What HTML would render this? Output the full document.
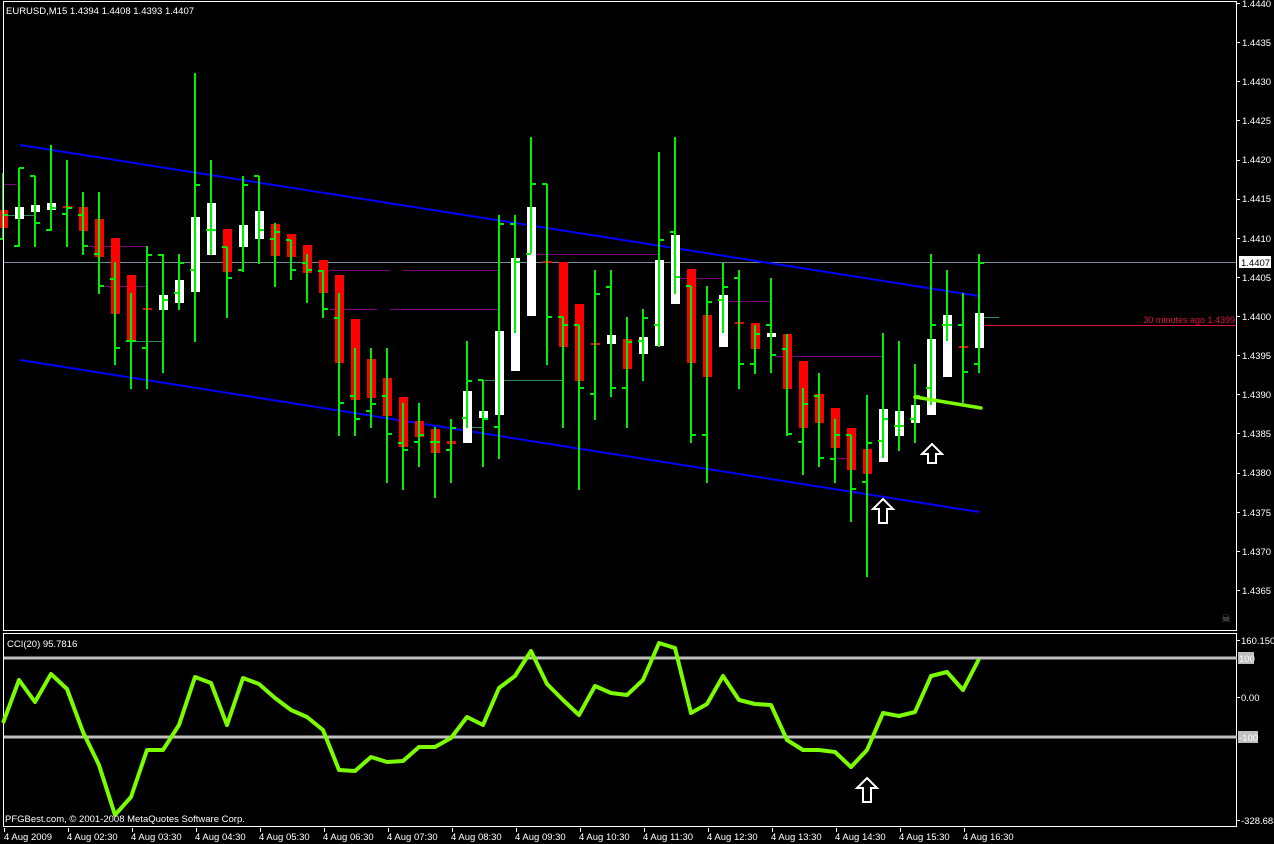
<!DOCTYPE html>
<html><head><meta charset="utf-8">
<style>
html,body{margin:0;padding:0;background:#000;width:1274px;height:844px;overflow:hidden}
svg{display:block}
text{font-family:"Liberation Sans",sans-serif;font-size:9.5px;fill:#fff}
</style></head><body>
<svg id="s" width="1274" height="844" xmlns="http://www.w3.org/2000/svg" shape-rendering="crispEdges">
<rect width="1274" height="844" fill="#000"/>
<!-- misc horizontal lines -->
<g stroke="#800080" stroke-width="1">
<line x1="3" y1="184.5" x2="17" y2="184.5"/>
<line x1="87" y1="246.5" x2="147" y2="246.5"/>
<line x1="103" y1="286.5" x2="147" y2="286.5"/>
<line x1="330" y1="270.5" x2="390" y2="270.5"/>
<line x1="403" y1="270.5" x2="498" y2="270.5"/>
<line x1="330" y1="309.5" x2="377" y2="309.5"/>
<line x1="390" y1="309.5" x2="498" y2="309.5"/>
<line x1="535" y1="254.5" x2="659" y2="254.5"/>
<line x1="675" y1="278.5" x2="723" y2="278.5"/>
<line x1="727" y1="301.5" x2="771" y2="301.5"/>
<line x1="775" y1="356.5" x2="883" y2="356.5"/>
<line x1="835" y1="458.5" x2="851" y2="458.5"/>
</g>
<g stroke="#2e8b57" stroke-width="1">
<line x1="3" y1="215.5" x2="35" y2="215.5"/>
<line x1="127" y1="341.5" x2="163" y2="341.5"/>
<line x1="480" y1="380.5" x2="563" y2="380.5"/>
<line x1="462" y1="427.5" x2="483" y2="427.5"/>
<line x1="975" y1="317.5" x2="999" y2="317.5"/>
</g>
<line x1="3" y1="262.5" x2="1237" y2="262.5" stroke="#778899"/>
<line x1="979" y1="325.5" x2="1237" y2="325.5" stroke="#dc143c"/>
<text x="1235" y="323" text-anchor="end" style="fill:#dc143c;font-size:9px">30 minutes ago 1.4399</text>
<!-- channels -->
<g stroke="#0000ff" stroke-width="2" shape-rendering="auto">
<line x1="20" y1="145" x2="979" y2="296"/>
<line x1="20" y1="360" x2="979" y2="512"/>
</g>
<g id="bars"></g>
<line x1="915" y1="397" x2="981" y2="408" stroke="#7cfc00" stroke-width="3.5" shape-rendering="auto" stroke-linecap="round"/>
<!-- arrows -->
<g fill="none" stroke="#fff" stroke-width="2" shape-rendering="auto">
<path d="M932 444 L942 454 L936 454 L936 463 L928 463 L928 454 L922 454 Z"/>
<path d="M883 499 L893 509 L887 509 L887 523 L879 523 L879 509 L873 509 Z"/>
<path d="M867 778 L877 788 L871 788 L871 802 L863 802 L863 788 L857 788 Z"/>
</g>
<!-- frames -->
<g fill="none" stroke="#fff" stroke-width="1">
<rect x="3.5" y="1.5" width="1233" height="629"/>
<rect x="3.5" y="633.5" width="1233" height="193"/>
</g>
<text x="6" y="14">EURUSD,M15  1.4394 1.4408 1.4393 1.4407</text>
<!-- price axis -->
<g id="pax"></g>
<g>
<text x="1242" y="7">1.4440</text><text x="1242" y="46">1.4435</text><text x="1242" y="85">1.4430</text>
<text x="1242" y="124">1.4425</text><text x="1242" y="163">1.4420</text><text x="1242" y="202">1.4415</text>
<text x="1242" y="242">1.4410</text><text x="1242" y="281">1.4405</text><text x="1242" y="320">1.4400</text>
<text x="1242" y="359">1.4395</text><text x="1242" y="398">1.4390</text><text x="1242" y="437">1.4385</text>
<text x="1242" y="476">1.4380</text><text x="1242" y="516">1.4375</text><text x="1242" y="555">1.4370</text>
<text x="1242" y="594">1.4365</text>
</g>
<rect x="1239" y="256" width="32" height="12" fill="#fff"/>
<text x="1241" y="266" style="fill:#000">1.4407</text>
<text x="1221" y="622" style="fill:#808080;font-size:11px">☠</text>
<!-- CCI -->
<text x="7" y="647">CCI(20) 95.7816</text>
<g stroke="#c0c0c0" stroke-width="3">
<line x1="4" y1="658" x2="1237" y2="658"/>
<line x1="4" y1="737" x2="1237" y2="737"/>
</g>
<polyline id="cci" fill="none" stroke="#7cfc00" stroke-width="4" stroke-linejoin="round" shape-rendering="auto" points="3,723 19,680 35,702 51,674 67,689 83,732 99,765 115,815 131,797 147,750 163,750 179,725 195,677 211,683 227,725 243,678 259,684 275,698 291,710 307,717 323,730 339,770 355,771 371,757 387,762 403,761 419,747 435,747 451,738 467,717 483,725 499,688 515,676 531,651 547,684 563,700 579,715 595,686 611,693 627,695 643,680 659,643 675,648 691,713 707,704 723,676 739,700 755,704 771,705 787,740 803,750 819,750 835,752 851,767 867,750 883,713 899,716 915,712 931,676 947,672 963,690 979,659"/>
<text x="5" y="822">PFGBest.com, © 2001-2008 MetaQuotes Software Corp.</text>
<text x="1241" y="644">160.150</text>
<rect x="1238" y="652" width="16" height="12" fill="#c0c0c0"/><text x="1239" y="662">100</text>
<text x="1241" y="701">0.00</text>
<rect x="1238" y="731" width="20" height="12" fill="#c0c0c0"/><text x="1239" y="741">-100</text>
<text x="1241" y="824">-328.683</text>
<g stroke="#fff"><line x1="1237" y1="640.5" x2="1240" y2="640.5"/><line x1="1237" y1="697.5" x2="1240" y2="697.5"/><line x1="1237" y1="820.5" x2="1240" y2="820.5"/></g>
<!-- time axis -->
<g id="tax" stroke="#fff"></g>
<g>
<text x="4" y="840">4 Aug 2009</text><text x="67" y="840">4 Aug 02:30</text><text x="131" y="840">4 Aug 03:30</text>
<text x="195" y="840">4 Aug 04:30</text><text x="259" y="840">4 Aug 05:30</text><text x="323" y="840">4 Aug 06:30</text>
<text x="387" y="840">4 Aug 07:30</text><text x="451" y="840">4 Aug 08:30</text><text x="515" y="840">4 Aug 09:30</text>
<text x="579" y="840">4 Aug 10:30</text><text x="643" y="840">4 Aug 11:30</text><text x="707" y="840">4 Aug 12:30</text>
<text x="771" y="840">4 Aug 13:30</text><text x="835" y="840">4 Aug 14:30</text><text x="899" y="840">4 Aug 15:30</text>
<text x="963" y="840">4 Aug 16:30</text>
</g>
</svg>
<script>
var NS="http://www.w3.org/2000/svg";
function el(p,n,a){var e=document.createElementNS(NS,n);for(var k in a)e.setAttribute(k,a[k]);p.appendChild(e);return e;}
// k: [bodyTop,bodyBot,color(w/r),high,low,openTick,closeTick]
var D=[
[210,228,'r',173,239,239,215],
[207,219,'w',168,247,246,168],
[205,212,'w',176,247,176,223],
[203,210,'w',145,231,230,208],
[206,208,'r',160,247,214,208],
[207,231,'r',192,255,215,246],
[219,257,'r',192,294,254,286],
[238,314,'r',262,365,279,348],
[275,342,'r',293,389,341,341],
[308,310,'r',246,389,348,255],
[295,310,'w',254,373,255,300],
[280,303,'w',254,310,293,263],
[217,292,'w',73,342,270,185],
[203,255,'w',160,255,230,230],
[229,272,'r',247,318,247,278],
[225,247,'w',176,272,270,185],
[211,239,'w',176,264,176,230],
[224,256,'r',223,287,239,232],
[234,257,'r',240,280,240,270],
[245,273,'r',254,303,263,270],
[260,293,'r',270,318,271,309],
[275,363,'r',293,436,318,403],
[319,400,'r',348,436,396,419],
[359,398,'r',348,428,411,404],
[378,416,'r',348,483,396,434],
[397,447,'r',403,490,443,450],
[421,437,'r',403,467,442,435],
[429,453,'r',427,498,442,442],
[441,444,'r',419,483,450,428],
[391,443,'w',341,428,418,381],
[411,418,'w',380,467,380,419],
[331,415,'w',215,459,427,224],
[258,371,'w',215,333,224,262],
[207,316,'w',137,253,254,184],
[261,263,'r',184,365,184,317],
[262,347,'r',317,428,317,325],
[304,381,'r',325,490,325,388],
[343,345,'r',270,420,394,294],
[335,344,'w',270,397,287,388],
[339,369,'r',317,428,388,342],
[337,354,'w',309,381,341,318],
[260,346,'w',152,347,325,240],
[235,304,'w',137,294,232,277],
[269,363,'r',286,443,286,435],
[315,377,'r',286,483,435,302],
[295,347,'w',263,333,300,287],
[322,324,'r',270,389,278,364],
[323,349,'r',325,374,364,334],
[333,337,'w',278,373,325,355],
[334,389,'r',334,436,349,434],
[361,428,'r',388,475,442,404],
[394,423,'r',373,467,396,458],
[408,448,'r',419,483,459,435],
[428,470,'r',435,522,435,489],
[449,474,'r',395,577,482,443],
[409,462,'w',333,458,441,419],
[411,436,'w',341,451,426,426],
[405,423,'w',364,443,419,396],
[339,415,'w',254,405,388,325],
[315,377,'w',270,341,325,325],
[346,348,'r',293,403,325,372],
[313,348,'w',254,373,364,263]
];
var g=document.getElementById('bars');
for(var i=0;i<D.length;i++){
 var d=D[i],x=3+16*i;
 el(g,'rect',{x:x-4,y:d[0],width:9,height:Math.max(2,d[1]-d[0]),fill:d[2]=='w'?'#fff':'#ff0000'});
}
for(var i=0;i<D.length;i++){
 var d=D[i],x=3+16*i;
 el(g,'rect',{x:x-1,y:d[3],width:2,height:d[4]-d[3],fill:'#00ee00'});
 el(g,'rect',{x:x-5,y:d[5]-1,width:5,height:2,fill:'#00ee00'});
 el(g,'rect',{x:x,y:d[6]-1,width:5,height:2,fill:'#00ee00'});
}
var p=document.getElementById('pax');
for(var j=0;j<16;j++){var y=Math.round(3+39.13*j)+0.5;el(p,'line',{x1:1237,y1:y,x2:1240,y2:y,stroke:'#fff'});}
var t=document.getElementById('tax');
for(var j=0;j<16;j++){var x=4+64*j+0.5;el(t,'line',{x1:x,y1:828,x2:x,y2:832});}
</script>
</body></html>
